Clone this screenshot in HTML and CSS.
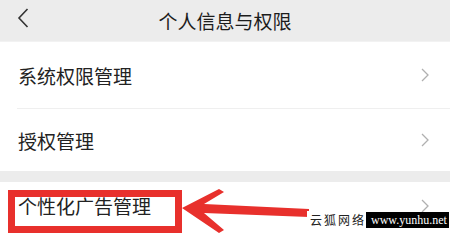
FILE: index.html
```html
<!DOCTYPE html>
<html lang="zh">
<head>
<meta charset="utf-8">
<link rel="stylesheet" href="styles.css">
</head>
<body>
<div class="screen">
  <header class="topbar">
    <svg class="back" width="12" height="20" viewBox="0 0 12 20"><path d="M10.5 1 L2 10 L10.5 19" fill="none" stroke="#333" stroke-width="1.6"/></svg>
    <div class="title">个人信息与权限</div>
  </header>
  <div class="row row1">
    <span class="label">系统权限管理</span>
    <svg class="chev" width="8" height="14" viewBox="0 0 8 14"><path d="M1 1 L7 7 L1 13" fill="none" stroke="#b0b0b0" stroke-width="1.3"/></svg>
  </div>
  <div class="divider"></div>
  <div class="row row2">
    <span class="label">授权管理</span>
    <svg class="chev" width="8" height="14" viewBox="0 0 8 14"><path d="M1 1 L7 7 L1 13" fill="none" stroke="#b0b0b0" stroke-width="1.3"/></svg>
  </div>
  <div class="band"></div>
  <div class="row row3">
    <span class="label">个性化广告管理</span>
    <svg class="chev" width="8" height="14" viewBox="0 0 8 14"><path d="M1 1 L7 7 L1 13" fill="none" stroke="#b0b0b0" stroke-width="1.3"/></svg>
  </div>

  <div class="redbox"></div>
  <svg class="arrow" width="140" height="50" viewBox="180 186 140 50"><polygon points="182,208 219,189 224,192 204,204 309,209 309,217 204,213 224,230 219,233" fill="#e8302c"/></svg>
  <div class="watermark"><span class="wm-cn">云狐网络</span><span class="wm-url">www.yunhu.net</span></div>
</div>
</body>
</html>
```
FILE: styles.css
```css
html, body {
  margin: 0;
  padding: 0;
  background: #fff;
}
.screen {
  position: relative;
  width: 450px;
  height: 236px;
  overflow: hidden;
  font-family: "Noto Sans CJK SC", "Noto Sans", sans-serif;
  background: #fff;
}
.topbar {
  height: 41px;
  background: #ececec;
  border-bottom: 1px solid #f2f2f2;
  display: flex;
  align-items: center;
  justify-content: center;
  position: relative;
}
.back {
  position: absolute;
  left: 17px;
  top: 8px;
}
.title {
  font-size: 19px;
  line-height: 1;
  color: #1c1c1c;
  margin-top: -1px;
}
.row {
  display: flex;
  align-items: center;
  justify-content: space-between;
  padding: 0 21px 0 18px;
}
.row1 { height: 66px; }
.row2 { height: 62px; }
.row3 { height: 55px; padding-bottom: 8px; box-sizing: border-box; }
.label {
  font-size: 19px;
  line-height: 1;
  color: #222;
}
.divider {
  height: 1px;
  margin-left: 17px;
  background: #efefef;
}
.band {
  height: 11px;
  background: #ececec;
}
.redbox {
  position: absolute;
  left: 8px;
  top: 190px;
  width: 160px;
  height: 29px;
  border: 7px solid #e8302c;
}
.arrow {
  position: absolute;
  left: 180px;
  top: 186px;
}
.watermark {
  position: absolute;
  left: 307px;
  top: 211px;
  width: 143px;
  display: flex;
  align-items: center;
  white-space: nowrap;
}
.wm-cn {
  flex: 0 0 58px;
  box-sizing: border-box;
  font-size: 12px;
  letter-spacing: 2px;
  color: #222;
  background: #fff;
  padding-left: 3px;
  line-height: 17px;
}
.wm-url {
  flex: 0 0 83px;
  box-sizing: border-box;
  background: #000;
  color: #fff;
  font-family: "Liberation Serif", serif;
  font-size: 12px;
  line-height: 16px;
  padding-left: 5px;
  overflow: hidden;
}
```
